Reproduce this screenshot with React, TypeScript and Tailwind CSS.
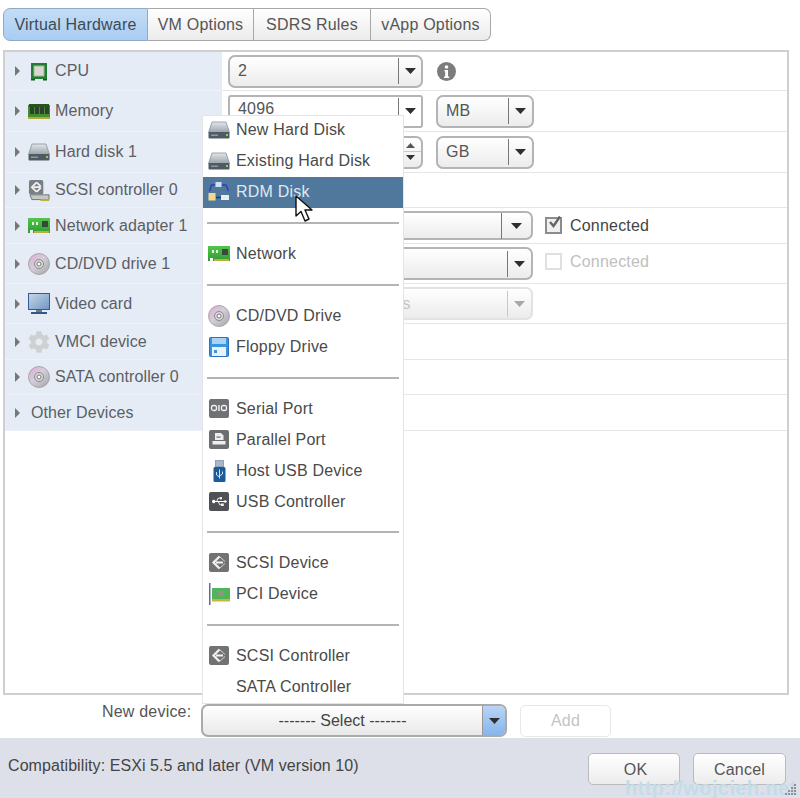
import { FaCog, FaUsb } from 'react-icons/fa'

function Triangle({ disabled = false, up = false }: { disabled?: boolean; up?: boolean }) {
  return (
    <svg width="11" height="6" viewBox="0 0 11 6">
      <path d={up ? 'M0 6h11L5.500 0z' : 'M0 0h11L5.500 6z'} fill={disabled ? '#a8a8a8' : '#2f2f2f'} />
    </svg>
  )
}

function DiskIcon() {
  return (
    <svg width="22" height="18" viewBox="0 0 22 18">
      <defs>
        <linearGradient id="disk" x1="0" y1="0" x2="0" y2="1">
          <stop offset="0" stopColor="#e2e6ea" />
          <stop offset="1" stopColor="#9aa3ab" />
        </linearGradient>
      </defs>
      <path d="M4 1h14l3.500 10.500H.5z" fill="url(#disk)" stroke="#8a929a" strokeWidth="0.8" />
      <rect x="0.500" y="11" width="21" height="6.500" rx="1" fill="#4f5a62" />
      <rect x="3" y="13.500" width="7" height="1.500" fill="#8e979e" />
      <rect x="18" y="13" width="2" height="2" fill="#8fd14f" />
    </svg>
  )
}

function ChipIcon() {
  return (
    <svg width="18" height="19" viewBox="0 0 18 19">
      <rect x="1" y="1" width="16" height="16" fill="#1f7f2f" />
      <path d="M1 17h4v1.500H1zM13 17h4v1.500h-4z" fill="#14561f" />
      <rect x="4" y="4" width="10" height="10" fill="#d6d8d2" stroke="#aab0a6" />
    </svg>
  )
}

function MemoryIcon() {
  return (
    <svg width="22" height="15" viewBox="0 0 22 15">
      <rect x="0" y="1" width="22" height="12" fill="#3f8f2d" />
      <rect x="1" y="0" width="20" height="3" fill="#26561f" />
      <rect x="2" y="3" width="4" height="7" fill="#333d33" />
      <rect x="7" y="3" width="4" height="7" fill="#333d33" />
      <rect x="12" y="3" width="4" height="7" fill="#333d33" />
      <rect x="17" y="3" width="4" height="7" fill="#333d33" />
      <path d="M0 13h22v2H0z" fill="#b7a83a" />
    </svg>
  )
}

function ControllerIcon() {
  return (
    <svg width="23" height="23" viewBox="0 0 23 23">
      <rect x="1" y="0.500" width="15" height="15" rx="2" fill="#7b7f83" />
      <path d="M9 3 4 8l5 5M6 8h7M9 3l4.500 4.500M9 13l4.500-4.500" fill="none" stroke="#f2f2f2" strokeWidth="1.800" />
      <path d="M2 16h20v5H4z" fill="#c4c8c4" stroke="#55595c" strokeWidth="0.8" />
      <rect x="13" y="20.500" width="9" height="2" fill="#c0ad3b" />
    </svg>
  )
}

function NetworkIcon() {
  return (
    <svg width="22" height="17" viewBox="0 0 22 17">
      <defs>
        <linearGradient id="nic" x1="0" y1="0" x2="0" y2="1">
          <stop offset="0" stopColor="#54c64a" />
          <stop offset="1" stopColor="#2f9a36" />
        </linearGradient>
      </defs>
      <path d="M0 1h22v15H5v-3H2v3H0z" fill="url(#nic)" />
      <rect x="4" y="5" width="2" height="3" fill="#e6f5df" />
      <rect x="8" y="5" width="2" height="3" fill="#e6f5df" />
      <rect x="14" y="4" width="6" height="6" fill="#394a3c" />
      <path d="M6 14h15v2H6z" fill="#b8b23c" />
    </svg>
  )
}

function DiscIcon() {
  return (
    <svg width="22" height="22" viewBox="0 0 22 22">
      <defs>
        <linearGradient id="disc" x1="0" y1="0" x2="1" y2="1">
          <stop offset="0" stopColor="#e3a6d6" />
          <stop offset="0.450" stopColor="#d4ced8" />
          <stop offset="1" stopColor="#a5a5a8" />
        </linearGradient>
      </defs>
      <circle cx="11" cy="11" r="10.500" fill="url(#disc)" stroke="#9a9a9c" strokeWidth="0.8" />
      <circle cx="11" cy="11" r="4.500" fill="#d9d9dc" stroke="#8a8a8c" />
      <circle cx="11" cy="11" r="2" fill="#fff" stroke="#77777a" />
    </svg>
  )
}

function MonitorIcon() {
  return (
    <svg width="22" height="22" viewBox="0 0 22 22">
      <defs>
        <linearGradient id="screen" x1="0" y1="0" x2="1" y2="1">
          <stop offset="0" stopColor="#c6d8ea" />
          <stop offset="1" stopColor="#6f97c2" />
        </linearGradient>
      </defs>
      <rect x="0.500" y="0.500" width="21" height="16" fill="url(#screen)" stroke="#2f5d93" />
      <rect x="8" y="17" width="6" height="2" fill="#6c7f92" />
      <rect x="3" y="19" width="16" height="2" fill="#36597f" />
    </svg>
  )
}

function GearIcon() {
  return <FaCog size={22} color="#cfd0d2" />
}

function RdmIcon() {
  return (
    <svg width="22" height="20" viewBox="0 0 22 20">
      <rect x="7.500" y="0" width="6" height="5" fill="#cfe0f5" />
      <path d="M7 3H3.500L1.500 9M14 3h4l2.500 6" fill="none" stroke="#2a3fc0" strokeWidth="1.400" />
      <rect x="0.500" y="11" width="7" height="7.500" fill="#f3d98b" />
      <rect x="13" y="13" width="8" height="5" fill="#e8edf2" />
      <path d="M8 15.500h5" stroke="#1d2fa8" strokeWidth="1.400" />
    </svg>
  )
}

function FloppyIcon() {
  return (
    <svg width="20" height="20" viewBox="0 0 20 20">
      <rect x="0.500" y="0.500" width="19" height="19" rx="1" fill="#3c93e0" stroke="#2a72bb" />
      <rect x="3" y="1" width="14" height="6" fill="#a9d3f5" />
      <rect x="3" y="10" width="14" height="9" fill="#e9f3fb" />
      <rect x="5" y="13" width="3" height="3" fill="#3c93e0" />
    </svg>
  )
}

function SerialIcon() {
  return (
    <svg width="20" height="19" viewBox="0 0 20 19">
      <rect width="20" height="19" rx="2" fill="#6f7174" />
      <rect x="2.500" y="6.500" width="5" height="5" rx="2" fill="none" stroke="#f0f0f0" strokeWidth="1.300" />
      <rect x="9.200" y="6" width="1.500" height="6" fill="#f0f0f0" />
      <rect x="12.500" y="6.500" width="5" height="5" rx="2" fill="none" stroke="#f0f0f0" strokeWidth="1.300" />
    </svg>
  )
}

function ParallelIcon() {
  return (
    <svg width="20" height="19" viewBox="0 0 20 19">
      <rect width="20" height="19" rx="2" fill="#6c6e70" />
      <path d="M6 3h6l2.500 2.500V10H6z" fill="#eee" />
      <rect x="3.500" y="11" width="13" height="3.500" fill="#eee" />
      <rect x="7.500" y="6.500" width="4" height="1.200" fill="#6c6e70" />
    </svg>
  )
}

function HostUsbIcon() {
  return (
    <svg width="13" height="22" viewBox="0 0 13 22">
      <rect x="2.500" y="0" width="8" height="7" fill="#a9b7c7" stroke="#5f7a9c" strokeWidth="0.600" />
      <rect x="0.500" y="7" width="12" height="15" rx="1.500" fill="#1d5a9a" />
      <path d="M6.500 9.500v9M3.500 12v3l3 2M9.500 11.500v2.500l-3 2" fill="none" stroke="#cfe3f7" strokeWidth="1" />
    </svg>
  )
}

function UsbIcon() {
  return (
    <span className="flex h-[19px] w-[20px] items-center justify-center rounded-[2px] bg-[#4f5154] text-white">
      <FaUsb size={15} />
    </span>
  )
}

function ScsiIcon() {
  return (
    <svg width="20" height="19" viewBox="0 0 20 19">
      <rect width="20" height="19" rx="2" fill="#707274" />
      <path d="M10.500 3.500 4.500 9.500l6 6M7 9.500h7" fill="none" stroke="#f2f2f2" strokeWidth="2.200" />
      <path d="M10.500 3.500l5.500 5M10.500 15.500l5.500-5" fill="none" stroke="#d4d4d4" strokeWidth="1" />
    </svg>
  )
}

function PciIcon() {
  return (
    <svg width="21" height="22" viewBox="0 0 21 22">
      <rect x="0" y="0" width="1.500" height="22" fill="#5a6d9c" />
      <rect x="3" y="5" width="18" height="12" fill="#4fb45a" />
      <rect x="9" y="8" width="6" height="5" fill="#8b9a7c" />
      <rect x="3" y="16" width="18" height="2.500" fill="#c7b63a" />
    </svg>
  )
}

function InfoIcon() {
  return (
    <svg width="19" height="19" viewBox="0 0 19 19">
      <circle cx="9.500" cy="9.500" r="9.500" fill="#7c7c7c" />
      <circle cx="9.500" cy="5" r="1.800" fill="#fff" />
      <path d="M7.500 8h3.500v6.500h1.200V16H7v-1.500h1.200V9.500H7.500z" fill="#fff" />
    </svg>
  )
}

function Select({ widthClass, heightClass, sepClass, value, disabled = false, stepper = false, input = false }: { widthClass: string; heightClass: string; sepClass: string; value?: string; disabled?: boolean; stepper?: boolean; input?: boolean }) {
  return (
    <div className={`flex shrink-0 items-center border-2 bg-linear-to-b ${input ? 'rounded-[3px] from-white to-white' : 'rounded-[7px] from-white to-[#ececec]'} ${widthClass} ${heightClass} ${disabled ? 'border-[#e2e2e2]' : 'border-[#b4b4b4]'}`}>
      <span className={`flex-1 truncate pl-[8px] ${input ? 'mb-[5px]' : ''} ${disabled ? 'text-[#c4c4c4]' : 'text-[#555]'}`}>{value}</span>
      {stepper ? (
        <span className="flex h-[26px] w-[23px] shrink-0 flex-col items-center justify-center gap-[3px] border-l border-[#777] pb-[2px]">
          <svg width="9" height="5" viewBox="0 0 9 5"><path d="M0 5h9L4.500 0z" fill="#555" /></svg>
          <span className="h-px w-full bg-[#c8c8c8]" />
          <svg width="9" height="5" viewBox="0 0 9 5"><path d="M0 0h9L4.500 5z" fill="#333" /></svg>
        </span>
      ) : (
        <span className={`flex h-[26px] shrink-0 items-center justify-center border-l ${sepClass} ${disabled ? 'border-[#c8c8c8]' : 'border-[#777]'}`}>
          <Triangle disabled={disabled} />
        </span>
      )}
    </div>
  )
}

function Check({ checked }: { checked: boolean }) {
  return (
    <span className={`relative ml-[12px] block h-[17px] w-[17px] shrink-0 border-2 ${checked ? 'border-[#8c8c8c] bg-[#f0f0f0]' : 'border-[#e0e0e0] bg-white'}`}>
      {checked && (
        <svg className="absolute -top-[4px] left-0" width="16" height="16" viewBox="0 0 16 16">
          <path d="M3 7l3.500 4L13 1.500" fill="none" stroke="#666" strokeWidth="2.400" />
        </svg>
      )}
    </span>
  )
}

const rows = [
  { label: 'CPU', icon: <ChipIcon />, rowClass: 'h-[39px]' },
  { label: 'Memory', icon: <MemoryIcon />, rowClass: 'h-[41px]' },
  { label: 'Hard disk 1', icon: <DiskIcon />, rowClass: 'h-[41px]' },
  { label: 'SCSI controller 0', icon: <ControllerIcon />, rowClass: 'h-[35px]' },
  { label: 'Network adapter 1', icon: <NetworkIcon />, rowClass: 'h-[36px]' },
  { label: 'CD/DVD drive 1', icon: <DiscIcon />, rowClass: 'h-[40px]' },
  { label: 'Video card', icon: <MonitorIcon />, rowClass: 'h-[40px]' },
  { label: 'VMCI device', icon: <GearIcon />, rowClass: 'h-[36px]' },
  { label: 'SATA controller 0', icon: <DiscIcon />, rowClass: 'h-[35px]' },
  { label: 'Other Devices', rowClass: 'h-[36px]' },
]

function RowControls({ index }: { index: number }) {
  if (index === 0) {
    return (
      <>
        <Select widthClass="w-[195px]" heightClass="h-[33px]" sepClass="w-[23px]" value="2" />
        <span className="ml-[14px] flex"><InfoIcon /></span>
      </>
    )
  }
  if (index === 1) {
    return (
      <>
        <Select widthClass="w-[195px]" heightClass="h-[33px]" sepClass="w-[23px]" value="4096" input />
        <span className="w-[13px]" />
        <Select widthClass="w-[98px]" heightClass="h-[33px]" sepClass="w-[24px]" value="MB" />
      </>
    )
  }
  if (index === 2) {
    return (
      <>
        <Select widthClass="w-[195px]" heightClass="h-[33px]" sepClass="w-[23px]" stepper />
        <span className="w-[13px]" />
        <Select widthClass="w-[98px]" heightClass="h-[33px]" sepClass="w-[24px]" value="GB" />
      </>
    )
  }
  if (index === 4) {
    return (
      <>
        <Select widthClass="w-[305px]" heightClass="h-[29px]" sepClass="w-[30px]" />
        <Check checked />
        <span className="ml-[8px] text-[#444]">Connected</span>
      </>
    )
  }
  if (index === 5) {
    return (
      <>
        <Select widthClass="w-[305px]" heightClass="h-[33px]" sepClass="w-[24px]" />
        <span className="mb-[4px] flex items-center">
          <Check checked={false} />
          <span className="ml-[8px] text-[#c0c0c0]">Connected</span>
        </span>
      </>
    )
  }
  if (index === 6) {
    return <Select widthClass="w-[305px]" heightClass="h-[33px]" sepClass="w-[24px]" value="Specify custom settings" disabled />
  }
  return null
}

const menuItems: ({ label: string; icon?: React.ReactNode; active?: boolean } | null)[] = [
  { label: 'New Hard Disk', icon: <DiskIcon /> },
  { label: 'Existing Hard Disk', icon: <DiskIcon /> },
  { label: 'RDM Disk', icon: <RdmIcon />, active: true },
  null,
  { label: 'Network', icon: <NetworkIcon /> },
  null,
  { label: 'CD/DVD Drive', icon: <DiscIcon /> },
  { label: 'Floppy Drive', icon: <FloppyIcon /> },
  null,
  { label: 'Serial Port', icon: <SerialIcon /> },
  { label: 'Parallel Port', icon: <ParallelIcon /> },
  { label: 'Host USB Device', icon: <HostUsbIcon /> },
  { label: 'USB Controller', icon: <UsbIcon /> },
  null,
  { label: 'SCSI Device', icon: <ScsiIcon /> },
  { label: 'PCI Device', icon: <PciIcon /> },
  null,
  { label: 'SCSI Controller', icon: <ScsiIcon /> },
  { label: 'SATA Controller' },
]

const tabs = [
  { label: 'Virtual Hardware', tabClass: 'w-[145px] rounded-l-[7px] border-[#8fa9c6] bg-linear-to-b from-[#c4dcf5] to-[#a9cdf2] text-[#3d4a55]' },
  { label: 'VM Options', tabClass: 'w-[106px] border-l-0 border-[#a8a8a8] bg-linear-to-b from-white to-[#ebebeb] text-[#555]' },
  { label: 'SDRS Rules', tabClass: 'w-[117px] border-l-0 border-[#a8a8a8] bg-linear-to-b from-white to-[#ebebeb] text-[#555]' },
  { label: 'vApp Options', tabClass: 'w-[120px] rounded-r-[7px] border-l-0 border-[#a8a8a8] bg-linear-to-b from-white to-[#ebebeb] text-[#555]' },
]

export default function App() {
  return (
    <div className="relative flex h-[798px] w-[800px] flex-col overflow-hidden bg-white font-['Liberation_Sans',Arial,sans-serif] text-[16px] tracking-[0.2px]">
      <div className="flex pl-[3px] pt-[8px]">
        {tabs.map((tab) => (
          <div key={tab.label} className={`flex h-[33px] items-center justify-center border ${tab.tabClass}`}>
            {tab.label}
          </div>
        ))}
      </div>

      <div className="ml-[3px] mt-[9px] h-[645px] w-[786px] border-2 border-[#cfcfcf]">
        {rows.map((row, index) => (
          <div key={row.label} className={`flex ${row.rowClass}`}>
            <div className="flex w-[217px] items-center border-b border-[#edf1f8] bg-[#e6ecf5] tracking-[0.1px] text-[#5a5f66]">
              <span className="ml-[10px] mr-[8px] h-0 w-0 border-y-[5px] border-l-[5px] border-y-transparent border-l-[#777]" />
              {row.icon ? <span className="mr-[5px] flex w-[22px] shrink-0 justify-center">{row.icon}</span> : <span className="w-[3px]" />}
              {row.label}
            </div>
            <div className="flex flex-1 items-center border-b border-[#e6e6e6] pl-[6px] text-[#555]">
              <RowControls index={index} />
            </div>
          </div>
        ))}
      </div>

      <div className="flex h-[43px] pl-[102px]">
        <span className="mt-[5px] w-[99px] text-[#555]">New device:</span>
        <div className="mt-[9px] flex h-[33px] w-[306px] items-center rounded-[7px] border-2 border-[#aaa] bg-linear-to-b from-white to-[#e8e8e8] tracking-normal text-[#444]">
          <span className="flex-1 text-center">------- Select -------</span>
          <span className="flex h-full w-[23px] items-center justify-center rounded-r-[5px] border-l border-[#999] bg-linear-to-b from-[#b9d4f5] to-[#87b5ec]">
            <Triangle />
          </span>
        </div>
        <div className="ml-[13px] mt-[10px] flex h-[32px] w-[91px] items-center justify-center rounded-[5px] border border-[#e8e8e8] bg-white text-[#c4c4c4]">Add</div>
      </div>

      <div className="flex flex-1 bg-[#dde0e8] pl-[8px] text-[#444]">
        <span className="mt-[16px] tracking-[0.08px]">Compatibility: ESXi 5.5 and later (VM version 10)</span>
        <div className="ml-auto mr-[14px] mt-[15px] flex gap-[13px]">
          <div className="flex h-[32px] w-[92px] items-center justify-center rounded-[5px] border border-[#bbb] bg-linear-to-b from-white to-[#ececec] pl-[3px] pt-[1px] text-[#555]">OK</div>
          <div className="flex h-[32px] w-[93px] items-center justify-center rounded-[5px] border border-[#bbb] bg-linear-to-b from-white to-[#ececec] pt-[1px] text-[#555]">Cancel</div>
        </div>
      </div>

      <div className="absolute left-[202px] top-[115px] w-[202px] border border-[#e4e4e4] bg-white text-[#4a4a4a]">
        {menuItems.map((item, index) =>
          item ? (
            <div key={item.label} className={`flex items-center ${index === 0 ? 'h-[30px] pb-[3px]' : 'h-[31px] pb-[2px]'} ${item.active ? 'bg-[#50789c] text-[#dfe8f0]' : ''}`}>
              <span className="ml-[5px] mr-[6px] flex w-[22px] shrink-0 justify-center">{item.icon}</span>
              {item.label}
            </div>
          ) : (
            <div key={index} className={`flex items-center px-[4px] pb-[2px] ${index === 13 ? 'h-[30px]' : 'h-[31px]'}`}>
              <div className="h-[2px] w-full bg-[#b4b4b4]" />
            </div>
          ),
        )}
      </div>

      <svg className="absolute left-[295px] top-[195px]" width="19" height="28" viewBox="0 0 19 28">
        <path d="M1 1v20l5-4.500 4 9.500 4-2-4-9h7z" fill="#fff" stroke="#111" strokeWidth="1.400" strokeLinejoin="round" />
      </svg>

      <span className="absolute left-[625px] top-[775px] whitespace-nowrap text-[20px] font-bold leading-[26px] tracking-[0.4px] text-[#c3dcea]">http://wojcieh.net</span>
      <svg className="absolute bottom-[2px] right-[3px]" width="13" height="13" viewBox="0 0 13 13">
        <path d="M10 1h2v2h-2zM7 4h2v2H7zM10 4h2v2h-2zM4 7h2v2H4zM7 7h2v2H7zM10 7h2v2h-2zM1 10h2v2H1zM4 10h2v2H4zM7 10h2v2H7zM10 10h2v2h-2z" fill="#8d9096" />
      </svg>
    </div>
  )
}
